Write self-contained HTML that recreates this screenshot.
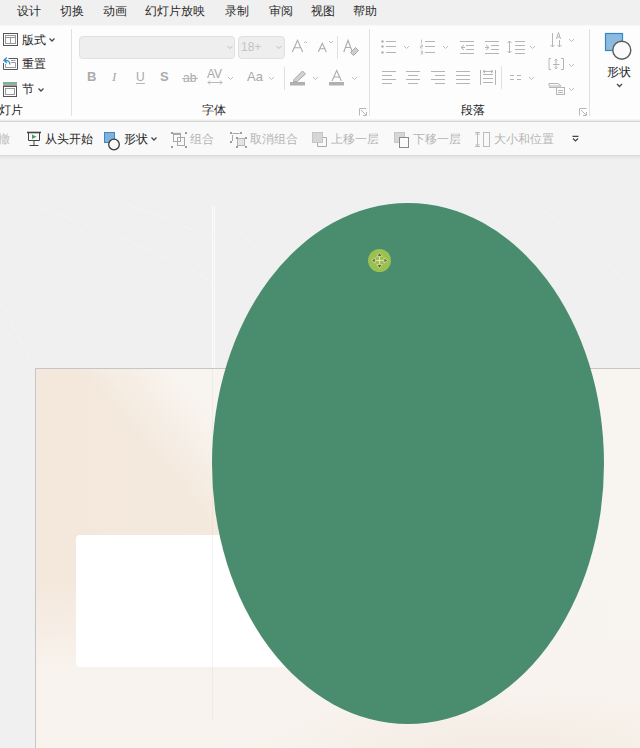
<!DOCTYPE html>
<html><head><meta charset="utf-8">
<style>
*{margin:0;padding:0;box-sizing:border-box}
html,body{width:640px;height:748px;overflow:hidden;background:#f0f0f0;font-family:"Liberation Sans",sans-serif;color:#262626}
.a{position:absolute}
#menu{left:0;top:0;width:640px;height:25px;background:#f0f0f0}
.m{position:absolute;top:4px;font-size:16px;line-height:16px;color:#2b2b2b;white-space:nowrap;-webkit-text-stroke:0.25px currentColor}
#ribbon{left:0;top:25px;width:640px;height:97px;background:linear-gradient(#f7f7f7 0px,#fdfdfd 2px,#fdfdfd 94px,#ececec 95px,#ececec 96px);border-bottom:1px solid #d4d4d4}
.t{position:absolute;font-size:12px;line-height:12px;white-space:nowrap;color:#262626}
.c{position:absolute;font-size:16px;line-height:16px;white-space:nowrap;color:#262626;-webkit-text-stroke:0.25px currentColor}
.cjk .c,.cjk .m{font-size:12px;margin-left:1px;-webkit-text-stroke:0}
.cjk .c{margin-top:-0.5px}
.cjk .m{margin-top:-1px}
.g{color:#b4b4b4}
#tb{left:0;top:122px;width:640px;height:34px;background:#f9f9f9;border-bottom:1px solid #d8d8d8}
#shadow{left:0;top:156px;width:640px;height:4px;background:linear-gradient(#e4e4e4,#f0f0f0)}
#slide{left:35px;top:368px;width:610px;height:400px;border:1px solid #c6c6c6;border-right:none;border-bottom:none;overflow:hidden;
 background:linear-gradient(90deg, #f4e8dc 0px, #f4e9dd 170px, #f7f0e9 260px, #f8f4f0 400px, #f8f5f1 605px)}
.lay{position:absolute}
#card{left:76px;top:535px;width:260px;height:132px;background:#ffffff;border-radius:4px}
#ell{left:212px;top:203px;width:392px;height:521px;border-radius:50%;background:#4a8c6e}
#handle{left:368px;top:249px;width:23px;height:23px;border-radius:50%;background:#98c14f}
.box{position:absolute;background:#eeeeee;border:1px solid #e0e0e0;border-radius:4px}
</style></head><body>
<div id="menu" class="a">
<span class="m" style="left:16px">设计</span><span class="m" style="left:59px">切换</span><span class="m" style="left:102px">动画</span><span class="m" style="left:144px">幻灯片放映</span><span class="m" style="left:224px">录制</span><span class="m" style="left:268px">审阅</span><span class="m" style="left:310px">视图</span><span class="m" style="left:352px">帮助</span>
</div>
<div id="ribbon" class="a"></div>
<div class="box" style="left:79px;top:36px;width:156px;height:23px"></div>
<div class="box" style="left:238px;top:36px;width:47px;height:23px"></div>
<span class="t g" style="left:241px;top:41px;font-size:12px;color:#c4c4c4">18+</span>

<!-- slide group text -->
<span class="c" style="left:21px;top:32.5px">版式</span>
<span class="c" style="left:21px;top:56.5px">重置</span>
<span class="c" style="left:21px;top:81px">节</span>
<span class="c" style="left:-2px;top:102px">灯片</span>
<span class="c" style="left:201px;top:102px">字体</span>
<span class="c" style="left:460px;top:102.5px">段落</span>
<span class="c" style="left:606px;top:64px">形状</span>

<!-- ribbon row2 font letters -->
<span class="t" style="left:87px;top:71px;font-size:13px;font-weight:bold;color:#ababab">B</span>
<span class="t" style="left:112px;top:71px;font-size:13px;font-style:italic;font-family:'Liberation Serif',serif;color:#a8a8a8">I</span>
<span class="t" style="left:136px;top:71px;font-size:12px;color:#a8a8a8">U</span>
<span class="t" style="left:160px;top:71px;font-size:13px;font-weight:bold;color:#ababab">S</span>
<span class="t" style="left:183px;top:72px;font-size:12px;color:#a8a8a8">ab</span>
<span class="t" style="left:207px;top:68px;font-size:12px;color:#a8a8a8">AV</span>
<span class="t" style="left:247px;top:71px;font-size:13px;color:#a8a8a8">Aa</span>

<div id="tb" class="a"></div>
<div id="shadow" class="a"></div>
<span class="c g" style="left:-3px;top:131.5px;color:#c0c0c0">撤</span>
<span class="c" style="left:44px;top:131.5px">从头开始</span>
<span class="c" style="left:123px;top:131.5px">形状</span>
<span class="c g" style="left:189px;top:131.5px">组合</span>
<span class="c g" style="left:249px;top:131.5px">取消组合</span>
<span class="c g" style="left:330px;top:131.5px">上移一层</span>
<span class="c g" style="left:412px;top:131.5px">下移一层</span>
<span class="c g" style="left:493px;top:131.5px">大小和位置</span>

<svg class="a" style="left:0;top:0" width="640" height="160" viewBox="0 0 640 160" fill="none">
 <!-- separators -->
 <g stroke="#e0e0e0" stroke-width="1">
  <line x1="71.5" y1="29" x2="71.5" y2="116"/>
  <line x1="369.5" y1="29" x2="369.5" y2="116"/>
  <line x1="589.5" y1="29" x2="589.5" y2="116"/>
  <line x1="337.5" y1="36" x2="337.5" y2="59"/>
  <line x1="284.5" y1="67" x2="284.5" y2="90"/>
  <line x1="501.5" y1="66" x2="501.5" y2="89"/>
 </g>
 <!-- layout icon -->
 <g stroke="#555" stroke-width="1">
  <rect x="3.5" y="33.5" width="14" height="12"/>
  <rect x="5.5" y="35.5" width="10" height="8" stroke="#999"/>
  <line x1="5.5" y1="37.5" x2="15.5" y2="37.5" stroke="#999"/>
  <line x1="10.5" y1="37.5" x2="10.5" y2="43.5" stroke="#999"/>
  <!-- reset -->
  <path d="M8.5 58.5 H17.5 V69.5 H3.5 V63"/>
  <path d="M11 60.5 H15.5 M11 62.5 H15.5 V67.5 H5.5 V64" stroke="#999"/>
  <!-- section -->
  <rect x="3.5" y="86.5" width="13" height="10"/>
  <rect x="5.5" y="88.5" width="9" height="6" stroke="#999"/>
 </g>
 <path d="M9.8 64.5 C9.8 61.5 8.8 60.3 4.5 60.3 M6.8 57.6 L4 60.3 L6.8 63" stroke="#3a8fc6" stroke-width="1.4" fill="none"/>
 <rect x="3" y="82" width="14" height="2.2" fill="#79b58f"/>
 <rect x="3" y="84.2" width="14" height="1.8" fill="#999"/>
 <!-- chevrons (dark) -->
 <g stroke="#4a4a4a" stroke-width="1.3">
  <path d="M49.5 38.5 L52 41 L54.5 38.5"/>
  <path d="M38.5 88.5 L41 91 L43.5 88.5"/>
  <path d="M617 84 L619.5 86.5 L622 84"/>
  <path d="M151.5 137.5 L154 140 L156.5 137.5"/>
 </g>
 <!-- chevrons (gray) -->
 <g stroke="#bdbdbd" stroke-width="1">
  <path d="M227.5 46 L230 48.5 L232.5 46"/>
  <path d="M276.5 46 L279 48.5 L281.5 46"/>
  <path d="M228 77 L230.5 79.5 L233 77"/>
  <path d="M269 77 L271.5 79.5 L274 77"/>
  <path d="M313 77 L315.5 79.5 L318 77"/>
  <path d="M352 77 L354.5 79.5 L357 77"/>
  <path d="M404 46 L406.5 48.5 L409 46"/>
  <path d="M443 46 L445.5 48.5 L448 46"/>
  <path d="M530 46 L532.5 48.5 L535 46"/>
  <path d="M529 77 L531.5 79.5 L534 77"/>
  <path d="M569 39 L571.5 41.5 L574 39"/>
  <path d="M569 64 L571.5 66.5 L574 64"/>
  <path d="M569 88 L571.5 90.5 L574 88"/>
  <path d="M304 43 L305.5 41.5 L307 43"/>
  <path d="M329 41 L331 43 L333 41"/>
 </g>
 <!-- AV arrows -->
 <g stroke="#b8b8b8" stroke-width="1">
  <path d="M208 82.5 H222 M210 80.5 L208 82.5 L210 84.5 M220 80.5 L222 82.5 L220 84.5"/>
  <line x1="182" y1="78.5" x2="198" y2="78.5"/>
  <line x1="136" y1="83.5" x2="145" y2="83.5"/>
 </g>
 <!-- highlighter & font color bars -->
 <rect x="290" y="82" width="15" height="3.5" fill="#b0b0b0"/>
 <rect x="329" y="82" width="15" height="3.5" fill="#b0b0b0"/>
 <path d="M294 79.5 L302.5 71 L305.5 74 L297 81.5 H293.5 Z" fill="#d2d2d2" stroke="#a8a8a8" stroke-width="1"/>
 <path d="M350.5 52.5 L355.5 47.5 L358.5 50.5 L353.5 55.5 Z" fill="#cfcfcf" stroke="#a8a8a8" stroke-width="1"/>
 <!-- A glyphs -->
 <g stroke="#ababab" stroke-width="1.1" stroke-linejoin="miter">
  <path d="M292.3 52 L297.5 40.3 L302.7 52 M294.2 47.8 H300.8"/>
  <path d="M318.3 52 L322.3 43.3 L326.3 52 M319.8 48.8 H324.8"/>
  <path d="M343.8 52 L348 40.3 L352 51 M345.5 47.5 H350"/>
  <path d="M332 81 L336.7 70.6 L341.4 81 M333.8 77 H339.6"/>
 </g>
 <!-- dialog launchers -->
 <g stroke="#b8b8b8" stroke-width="1">
  <path d="M359.5 115.5 V108.5 H366.5 M361 110 L366 115 M363 115.5 H366.5 V112"/>
  <path d="M579.5 115.5 V108.5 H586.5 M581 110 L586 115 M583 115.5 H586.5 V112"/>
 </g>
 <!-- paragraph icons -->
 <g stroke="#b5b5b5" stroke-width="1">
  <!-- bullets -->
  <path d="M386 41.5 H396 M386 46.5 H396 M386 52.5 H396"/>
  <path d="M381.5 41.5 h2 M381.5 46.5 h2 M381.5 52.5 h2" stroke-width="2" stroke="#a0a0a0"/>
  <!-- numbering -->
  <path d="M425 41.5 H435 M425 46.5 H435 M425 52.5 H435"/>
  <path d="M421.5 39.5 v4 M420.5 45 h2 v1.5 h-2 v1.5 h2 M420.5 51 h2 v1.5 h-1.5 M420.5 54 h2 v-1.5" stroke-width="0.8"/>
  <!-- decrease indent -->
  <path d="M460 41.5 H474 M466 45.5 H474 M466 49.5 H474 M460 53.5 H474 M464 45 L461 47.5 L464 50 M461 47.5 H465"/>
  <!-- increase indent -->
  <path d="M485 41.5 H499 M491 45.5 H499 M491 49.5 H499 M485 53.5 H499 M486 45 L489 47.5 L486 50 M485 47.5 H489"/>
  <!-- line spacing -->
  <path d="M515 41.5 H525 M515 45.5 H525 M515 49.5 H525 M515 53.5 H525 M509.5 41 V53 M507.5 43 L509.5 41 L511.5 43 M507.5 51 L509.5 53 L511.5 51"/>
  <!-- align left -->
  <path d="M382 71.5 H396 M382 75.5 H392 M382 79.5 H396 M382 83.5 H392"/>
  <!-- center -->
  <path d="M406 71.5 H420 M408 75.5 H418 M406 79.5 H420 M408 83.5 H418"/>
  <!-- right -->
  <path d="M431 71.5 H445 M435 75.5 H445 M431 79.5 H445 M435 83.5 H445"/>
  <!-- justify -->
  <path d="M456 71.5 H470 M456 75.5 H470 M456 79.5 H470 M456 83.5 H470"/>
  <!-- distributed -->
  <path d="M480.5 70 V85 M495.5 70 V85 M483 74.5 H493 M483 78.5 H493 M483 82.5 H493 M483 71.5 H493 M485 70 L483 71.5 L485 73 M491 70 L493 71.5 L491 73"/>
  <!-- columns -->
  <path d="M510 75.5 H514 M510 79.5 H514 M517 75.5 H521 M517 79.5 H521"/>
  <!-- text direction -->
  <path d="M552.5 33 V47 M550.5 45 L552.5 47 L554.5 45 M559.5 40 V47 M557.5 45 L559.5 47 L561.5 45"/>
  <path d="M556.5 39 L558.5 32.5 L560.5 39 M557.2 37 H559.8"/>
  <!-- align text -->
  <path d="M551 58.5 H549 V69.5 H551 M561 58.5 H563.5 V69.5 H561 M553 64.5 H559.5 M556 59 V69 M554.5 60.5 L556 59 L557.5 60.5 M554.5 67.5 L556 69 L557.5 67.5"/>
  <!-- smartart -->
  <path d="M549 83.5 H558 L561 86 H549 Z M549 87.5 H556" />
  <rect x="556.5" y="87.5" width="8" height="7"/>
  <path d="M558 90.5 H563 M558 92.5 H563"/>
 </g>
 <!-- shapes icon big -->
 <rect x="605.5" y="33.5" width="17" height="17" fill="#8bbbe0" stroke="#3589c0" stroke-width="1.2"/>
 <circle cx="621.8" cy="50.2" r="9" fill="#fafafa" stroke="#5a5a5a" stroke-width="1.4"/>
 <!-- toolbar icons -->
 <g stroke="#444" stroke-width="1">
  <path d="M28.5 133 V140.5 H39.5 V133 M34 141 V145 M29.5 145.5 H38.5"/>
  <path d="M27 132.5 H41" stroke-width="1.6"/>
 </g>
 <path d="M32 134.5 L36.5 136.8 L32 139 Z" fill="#4a9a6c"/>
 <rect x="104.5" y="132.5" width="10" height="10" fill="#7fb1dc" stroke="#3d86c6"/>
 <circle cx="114" cy="144.5" r="5.3" fill="#f8f8f8" stroke="#3a3a3a" stroke-width="1.3"/>
 <g stroke="#a9a9a9" stroke-width="1">
  <rect x="173.5" y="134.5" width="7" height="7"/>
  <rect x="177.5" y="137.5" width="7" height="8"/>
  <path d="M173 133.5 H181" stroke-width="1.4"/>
  <path d="M232.5 133.5 H239.5 M232.5 135 V141" />
  <rect x="237.5" y="138.5" width="7" height="7" fill="#e4e4e4" stroke="#b5b5b5"/>
 </g>
 <g fill="#9c9c9c">
  <rect x="171" y="132" width="2" height="2"/><rect x="185" y="132" width="2" height="2"/>
  <rect x="171" y="146" width="2" height="2"/><rect x="185" y="146" width="2" height="2"/>
  <rect x="230" y="132" width="2" height="2"/><rect x="240" y="132" width="2" height="2"/>
  <rect x="230" y="141" width="2" height="2"/><rect x="236" y="137" width="2" height="2"/>
  <rect x="245" y="137" width="2" height="2"/><rect x="236" y="146" width="2" height="2"/>
  <rect x="245" y="146" width="2" height="2"/>
 </g>
 <rect x="312.5" y="132.5" width="10" height="10" fill="#d6d6d6" stroke="#c6c6c6"/>
 <path d="M323 137.5 H326.5 V146.5 H317.5 V143" stroke="#aaaaaa"/>
 <rect x="394.5" y="132.5" width="10" height="10" fill="#d6d6d6" stroke="#c6c6c6"/>
 <rect x="399.5" y="137.5" width="9" height="10" fill="#fafafa" stroke="#8a8a8a"/>
 <g stroke="#bcbcbc" stroke-width="1">
  <path d="M477.5 133 V146 M475.5 135 L477.5 133 L479.5 135 M475.5 144 L477.5 146 L479.5 144 M475 132.5 H480 M475 146.5 H480"/>
  <rect x="483.5" y="132.5" width="6" height="14"/>
 </g>
 <path d="M572.5 136.3 H578.5 M573 138.5 L575.5 141 L578 138.5" stroke="#444" stroke-width="1.2"/>
</svg>

<svg class="a" style="left:0;top:156px" width="640" height="212" viewBox="0 156 640 212" fill="none">
 <g stroke="rgba(255,255,255,0.6)" stroke-width="1" stroke-dasharray="1.5 2.5">
  <path d="M29 206 Q120 232 212 281"/>
  <path d="M128 205 Q175 220 212 240"/>
  <path d="M0 300 Q16 328 30 362"/>
  <path d="M222 212 Q240 230 258 250"/>
  <path d="M540 208 Q600 250 640 300"/>
 </g>
</svg>
<div id="slide" class="a">
 <div class="lay" style="left:0;top:0;width:300px;height:300px;background:linear-gradient(49deg, rgba(248,244,239,0) 54%, rgba(248,244,239,1) 70%)"></div>
 <div class="lay" style="left:0;top:0;width:610px;height:400px;background:linear-gradient(180deg, rgba(248,243,238,0) 0px, rgba(248,243,238,0) 215px, rgba(248,243,238,0.95) 300px, rgba(248,243,238,0.95) 400px)"></div>
 <div class="lay" style="left:0;top:0;width:610px;height:400px;background:radial-gradient(260px 70px at 470px 385px, rgba(243,233,222,0.75) 0%, rgba(243,233,222,0) 100%)"></div>
</div>
</div>
<div id="card" class="a"></div>
<div class="a" style="left:212px;top:206px;width:1px;height:162px;background:rgba(255,255,255,0.7)"></div>
<div class="a" style="left:214px;top:206px;width:1px;height:162px;background:rgba(255,255,255,0.6)"></div>
<div class="a" style="left:212px;top:369px;width:1px;height:350px;background:rgba(200,195,190,0.18)"></div>
<div id="ell" class="a"></div>
<div id="handle" class="a"></div>
<svg class="a" style="left:368px;top:249px" width="23" height="23" viewBox="0 0 23 23">
 <path d="M11.5 7.5 V15.5 M7.5 11.5 H15.5" stroke="#e9e6b8" stroke-width="0.9"/>
 <g fill="#66652a" stroke="#efedc4" stroke-width="0.7" stroke-linejoin="round">
  <path d="M11.6 3.6 L14.4 7.4 H8.8 Z"/>
  <path d="M11.6 19.4 L14.4 15.6 H8.8 Z"/>
  <path d="M3.6 11.4 L7.2 8.8 V14 Z"/>
  <path d="M19.6 11.4 L16 8.8 V14 Z"/>
 </g>
</svg>
<script>
(function(){
 var t=document.createElement('span');
 t.style.cssText='position:absolute;left:0;top:0;font-size:100px;line-height:100px;white-space:nowrap;visibility:hidden;font-family:"Liberation Sans",sans-serif';
 t.textContent='\u8bbe\u8ba1';
 document.body.appendChild(t);
 var w=t.getBoundingClientRect().width;
 document.body.removeChild(t);
 if(w>180){document.documentElement.className='cjk';}
})();
</script>
</body></html>
